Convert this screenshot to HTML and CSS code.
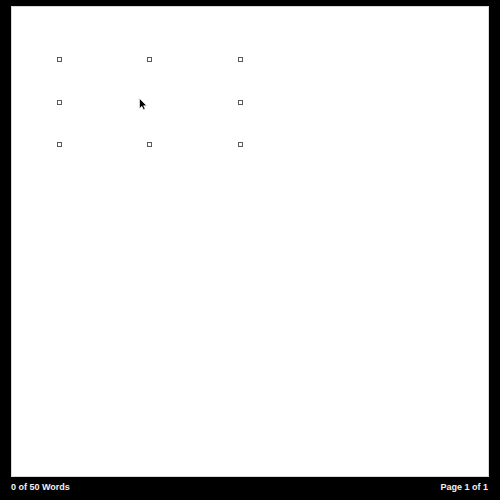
FILE: index.html
```html
<!DOCTYPE html>
<html>
<head>
<meta charset="utf-8">
<link rel="stylesheet" href="styles.css">
</head>
<body>
<div class="window">
  <div class="canvas">
    <div class="handles">
      <span class="handle"></span><span class="handle"></span><span class="handle"></span>
      <span class="handle"></span><span class="empty"></span><span class="handle"></span>
      <span class="handle"></span><span class="handle"></span><span class="handle"></span>
    </div>
    <svg class="cursor" width="9" height="13" viewBox="-0.5 -0.5 9 13">
      <path d="M0 0 L0 10 L2.4 7.8 L4 11.3 L5.6 10.6 L4.1 7.2 L7.2 7.2 Z" fill="#000" stroke="#fff" stroke-width="0.6" stroke-linejoin="round"/>
    </svg>
  </div>
  <div class="status">
    <span>0 of 50 Words</span>
    <span>Page 1 of 1</span>
  </div>
</div>
</body>
</html>
```
FILE: styles.css
```css
html, body {
  margin: 0;
  padding: 0;
  background: #000;
}
.window {
  width: 500px;
  height: 500px;
  display: flex;
  flex-direction: column;
  background: #000;
}
.canvas {
  position: relative;
  margin: 6px 11px 0 11px;
  width: 478px;
  height: 471px;
  box-sizing: border-box;
  background: #fff;
  border: 1px solid #d8d8d8;
}
.handles {
  display: grid;
  grid-template-columns: 90px 91px 5px;
  grid-template-rows: 43px 42px 5px;
  padding: 50px 0 0 45px;
}
.handle {
  width: 5px;
  height: 5px;
  box-sizing: border-box;
  border: 1px solid #5a5a5a;
  background: #fff;
}
.cursor {
  position: absolute;
  left: 127px;
  top: 91px;
}
.status {
  display: flex;
  justify-content: space-between;
  padding: 5px 12px 0 11px;
  font-family: "Liberation Sans", Arial, sans-serif;
  font-weight: bold;
  font-size: 9px;
  line-height: 11px;
  color: #f2f2f2;
}
```
